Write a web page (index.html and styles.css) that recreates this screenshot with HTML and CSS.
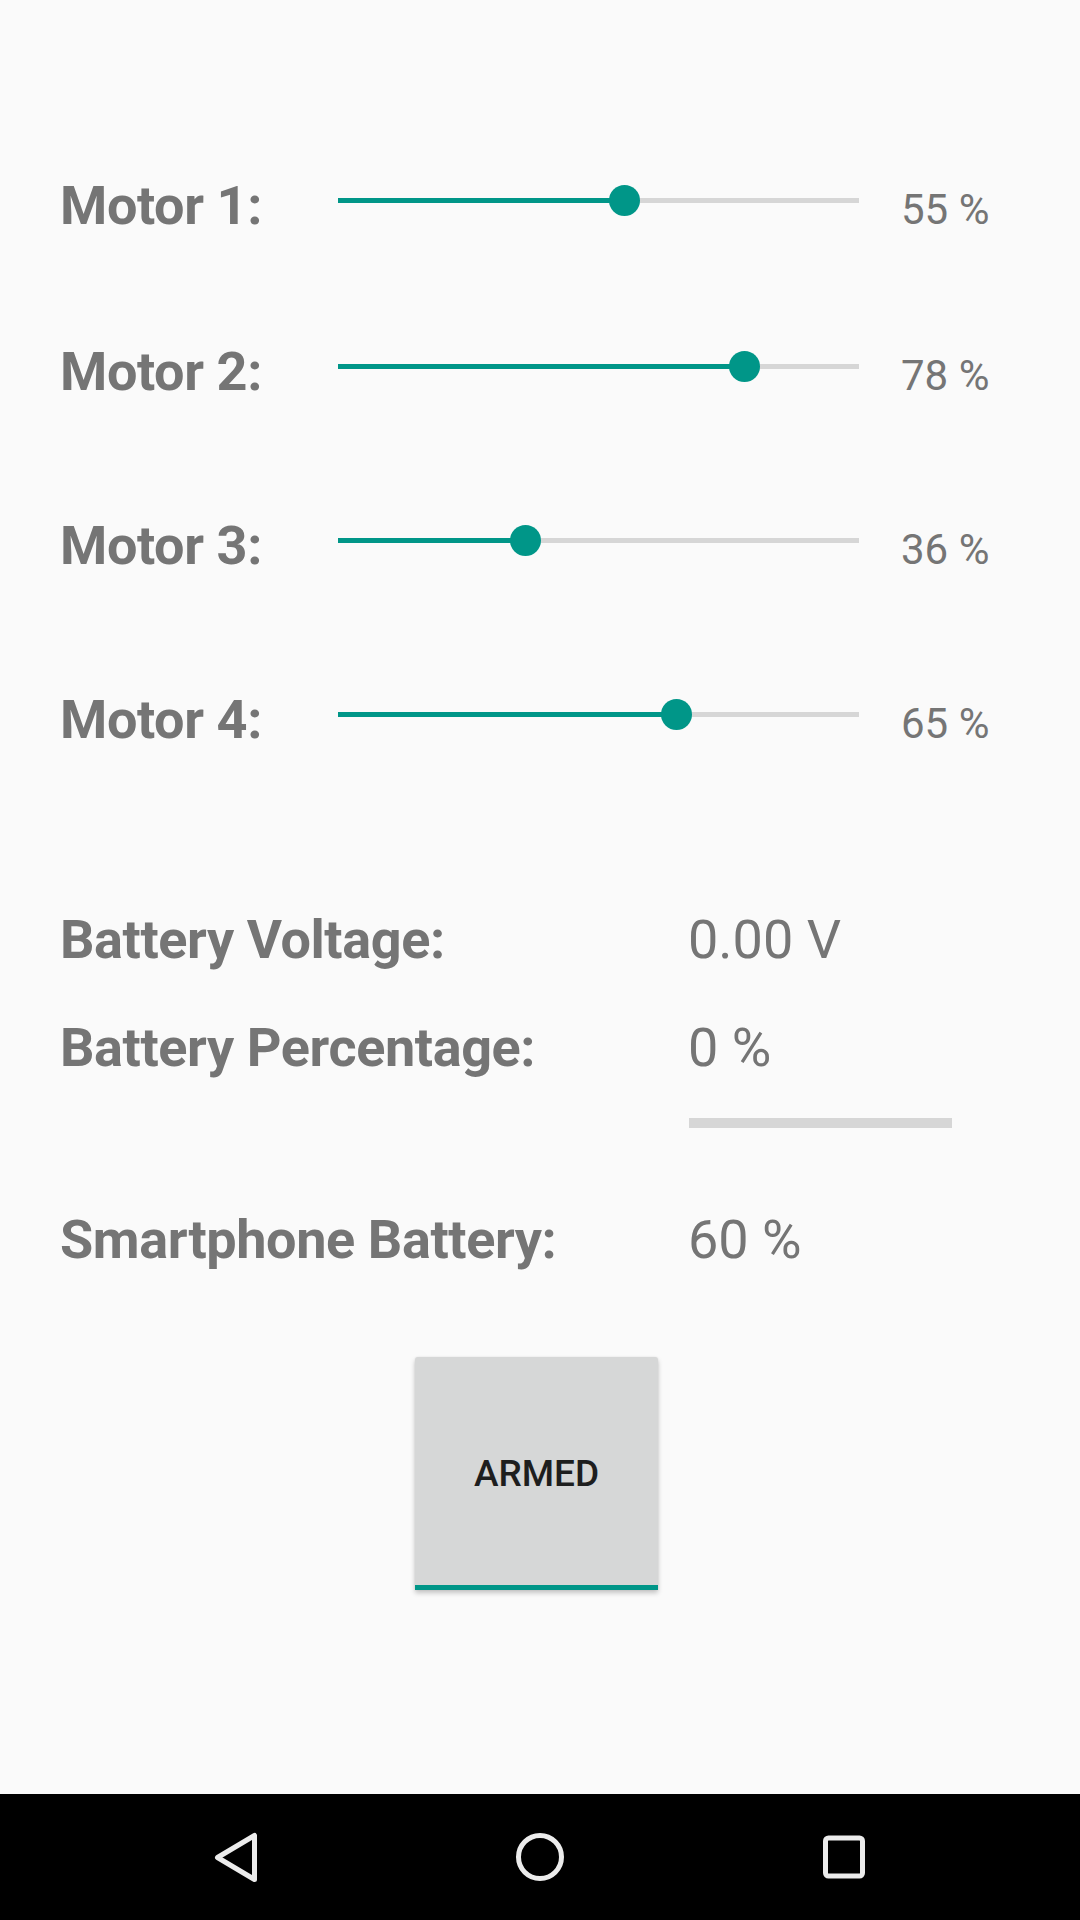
FILE: index.html
```html
<!DOCTYPE html>
<html>
<head>
<meta charset="utf-8">
<link rel="stylesheet" href="styles.css">
</head>
<body>
<div class="screen">
  <main class="content">
    <section class="motors">
      <div class="motor">
        <div class="label">Motor 1:</div>
        <div class="slider"><div class="fill" style="width:55%"></div><div class="thumb" style="left:55%"></div></div>
        <div class="pct">55 %</div>
      </div>
      <div class="motor">
        <div class="label">Motor 2:</div>
        <div class="slider"><div class="fill" style="width:78%"></div><div class="thumb" style="left:78%"></div></div>
        <div class="pct">78 %</div>
      </div>
      <div class="motor">
        <div class="label">Motor 3:</div>
        <div class="slider"><div class="fill" style="width:36%"></div><div class="thumb" style="left:36%"></div></div>
        <div class="pct">36 %</div>
      </div>
      <div class="motor">
        <div class="label">Motor 4:</div>
        <div class="slider"><div class="fill" style="width:65%"></div><div class="thumb" style="left:65%"></div></div>
        <div class="pct">65 %</div>
      </div>
    </section>
    <section class="battery">
      <div class="stat">
        <div class="stat-label">Battery Voltage:</div>
        <div class="stat-value">0.00 V</div>
      </div>
      <div class="stat second">
        <div class="stat-label">Battery Percentage:</div>
        <div class="stat-value">0 %</div>
      </div>
      <div class="bar-row"><div class="progress"></div></div>
      <div class="stat phone">
        <div class="stat-label">Smartphone Battery:</div>
        <div class="stat-value">60 %</div>
      </div>
    </section>
    <div class="button-row">
      <div class="armed-btn">ARMED</div>
    </div>
  </main>
  <nav class="navbar">
    <svg class="nav-icon" viewBox="0 0 60 60" width="60" height="60"><polygon points="48.5,8.5 48.5,52.5 11.5,30.5" fill="none" stroke="#ececec" stroke-width="5" stroke-linejoin="round"/></svg>
    <svg class="nav-icon" viewBox="0 0 60 60" width="60" height="60"><circle cx="30" cy="30" r="21.5" fill="none" stroke="#ececec" stroke-width="5"/></svg>
    <svg class="nav-icon" viewBox="0 0 60 60" width="60" height="60"><rect x="11.5" y="11" width="37" height="38" rx="3" fill="none" stroke="#ececec" stroke-width="5"/></svg>
  </nav>
</div>
</body>
</html>
```

FILE: styles.css
```css
html, body {
  margin: 0;
  padding: 0;
}
body {
  background: #fafafa;
  font-family: Roboto, "Noto Sans", sans-serif;
  color: #757575;
}
.screen {
  width: 1080px;
  height: 1920px;
  display: flex;
  flex-direction: column;
}
.content {
  flex: 1;
  display: flex;
  flex-direction: column;
}
.motors {
  padding-top: 176px;
  padding-left: 60px;
  display: flex;
  flex-direction: column;
}
.motor {
  display: flex;
  align-items: center;
  height: 60px;
}
.motor + .motor {
  margin-top: 114px;
}
.motor:nth-child(2) {
  margin-top: 106px;
}
.label {
  width: 278px;
  font-size: 54px;
  font-weight: 700;
  line-height: 60px;
  letter-spacing: -0.4px;
  white-space: nowrap;
}
.slider {
  position: relative;
  width: 521px;
  height: 5px;
  background: #d6d6d6;
  margin-bottom: 11px;
}
.fill {
  height: 100%;
  background: #009688;
}
.thumb {
  position: absolute;
  top: 50%;
  width: 31px;
  height: 31px;
  margin-left: -15.5px;
  margin-top: -15.5px;
  border-radius: 50%;
  background: #009688;
}
.pct {
  margin-left: 42px;
  font-size: 42px;
  line-height: 60px;
  margin-top: 8px;
  white-space: nowrap;
}
.battery {
  padding-top: 160px;
  padding-left: 60px;
  display: flex;
  flex-direction: column;
}
.stat {
  display: flex;
  height: 60px;
  font-size: 54px;
  line-height: 60px;
}
.stat.second {
  margin-top: 48px;
}
.stat-label {
  width: 628px;
  font-weight: 700;
  letter-spacing: -0.4px;
  white-space: nowrap;
}
.stat-value {
  white-space: nowrap;
}
.bar-row {
  padding-left: 629px;
  margin-top: 40px;
}
.progress {
  width: 263px;
  height: 10px;
  background: #d6d6d6;
}
.stat.phone {
  margin-top: 82px;
}
.button-row {
  padding-top: 87px;
  padding-left: 415px;
  display: flex;
}
.armed-btn {
  box-sizing: border-box;
  width: 243px;
  height: 233px;
  padding-top: 4px;
  border-bottom: 5px solid #009688;
  border-radius: 3px 3px 0 0;
  background: #d6d7d7;
  box-shadow: 0 3px 5px rgba(0, 0, 0, 0.22), 0 0 2px rgba(0, 0, 0, 0.08);
  display: flex;
  align-items: center;
  justify-content: center;
  font-size: 37px;
  font-weight: 500;
  color: #1e1e1e;
}
.navbar {
  height: 126px;
  background: #000;
  display: flex;
  align-items: center;
  justify-content: center;
  gap: 244px;
}
.nav-icon {
  display: block;
}
```
